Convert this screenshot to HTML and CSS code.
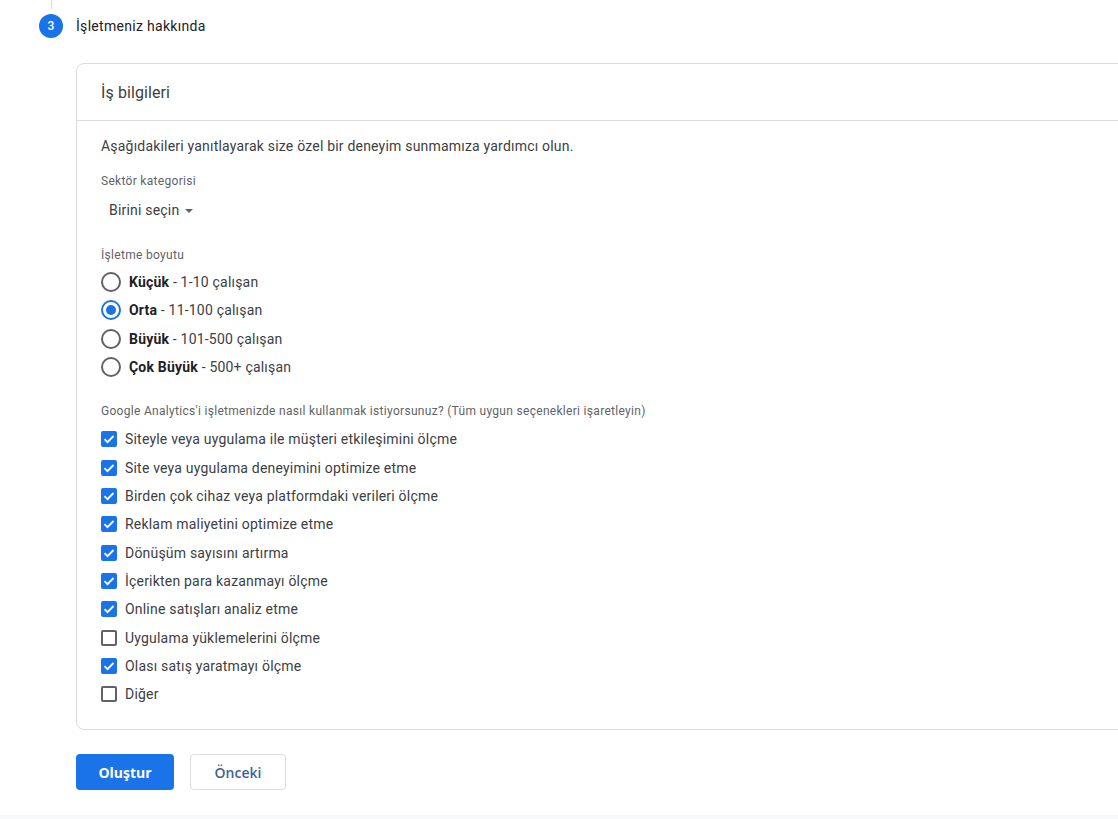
FILE: index.html
```html
<!DOCTYPE html>
<html lang="tr">
<head>
<meta charset="utf-8">
<title>İşletmeniz hakkında</title>
<link rel="stylesheet" href="styles.css">
</head>
<body>
<div class="page">
  <div class="connector"></div>
  <div class="step-head">
    <span class="step-num">3</span>
    <span class="step-title">İşletmeniz hakkında</span>
  </div>

  <section class="card">
    <div class="card-head">İş bilgileri</div>
    <div class="card-body">
      <p class="intro">Aşağıdakileri yanıtlayarak size özel bir deneyim sunmamıza yardımcı olun.</p>

      <div class="field-label label-sector">Sektör kategorisi</div>
      <div class="select">Birini seçin <span class="caret"></span></div>

      <div class="field-label label-size">İşletme boyutu</div>
      <div class="radios">
        <div class="radio-row"><span class="radio"></span><span><b>Küçük</b> - 1-10 çalışan</span></div>
        <div class="radio-row"><span class="radio on"></span><span><b>Orta</b> - 11-100 çalışan</span></div>
        <div class="radio-row"><span class="radio"></span><span><b>Büyük</b> - 101-500 çalışan</span></div>
        <div class="radio-row"><span class="radio"></span><span><b>Çok Büyük</b> - 500+ çalışan</span></div>
      </div>

      <div class="field-label label-use">Google Analytics'i işletmenizde nasıl kullanmak istiyorsunuz? (Tüm uygun seçenekleri işaretleyin)</div>
      <div class="checks">
        <div class="check-row"><span class="box on"><svg viewBox="0 0 16 16"><path d="M3.5 8.2l3 3 6-6.2" /></svg></span><span>Siteyle veya uygulama ile müşteri etkileşimini ölçme</span></div>
        <div class="check-row"><span class="box on"><svg viewBox="0 0 16 16"><path d="M3.5 8.2l3 3 6-6.2" /></svg></span><span>Site veya uygulama deneyimini optimize etme</span></div>
        <div class="check-row"><span class="box on"><svg viewBox="0 0 16 16"><path d="M3.5 8.2l3 3 6-6.2" /></svg></span><span>Birden çok cihaz veya platformdaki verileri ölçme</span></div>
        <div class="check-row"><span class="box on"><svg viewBox="0 0 16 16"><path d="M3.5 8.2l3 3 6-6.2" /></svg></span><span>Reklam maliyetini optimize etme</span></div>
        <div class="check-row"><span class="box on"><svg viewBox="0 0 16 16"><path d="M3.5 8.2l3 3 6-6.2" /></svg></span><span>Dönüşüm sayısını artırma</span></div>
        <div class="check-row"><span class="box on"><svg viewBox="0 0 16 16"><path d="M3.5 8.2l3 3 6-6.2" /></svg></span><span>İçerikten para kazanmayı ölçme</span></div>
        <div class="check-row"><span class="box on"><svg viewBox="0 0 16 16"><path d="M3.5 8.2l3 3 6-6.2" /></svg></span><span>Online satışları analiz etme</span></div>
        <div class="check-row"><span class="box"></span><span>Uygulama yüklemelerini ölçme</span></div>
        <div class="check-row"><span class="box on"><svg viewBox="0 0 16 16"><path d="M3.5 8.2l3 3 6-6.2" /></svg></span><span>Olası satış yaratmayı ölçme</span></div>
        <div class="check-row"><span class="box"></span><span>Diğer</span></div>
      </div>
    </div>
  </section>

  <div class="actions">
    <button class="btn primary">Oluştur</button>
    <button class="btn outline">Önceki</button>
  </div>
</div>
<div class="footer-strip"></div>
</body>
</html>
```

FILE: styles.css
```css
html, body {
  margin: 0;
  padding: 0;
  background: #ffffff;
  overflow: hidden;
}

body {
  font-family: Roboto, "Noto Sans", Arial, sans-serif;
  color: #3c4043;
  font-size: 14px;
  width: 1118px;
  height: 819px;
}

.page {
  height: 815px;
  overflow: hidden;
}

.connector {
  width: 1px;
  height: 9px;
  margin-left: 51px;
  background: #dadce0;
}

.step-head {
  display: flex;
  align-items: center;
  margin-top: 5px;
  margin-left: 39px;
  height: 24px;
}

.step-num {
  width: 24px;
  height: 24px;
  border-radius: 50%;
  background: #1a73e8;
  color: #fff;
  font-size: 12px;
  font-weight: 500;
  display: flex;
  align-items: center;
  justify-content: center;
}

.step-title {
  margin-left: 13px;
  font-size: 14px;
  color: #202124;
  letter-spacing: 0.3px;
}

.card {
  margin-top: 25px;
  margin-left: 76px;
  width: 1100px;
  border: 1px solid #dadce0;
  border-radius: 8px;
  box-sizing: border-box;
  height: 667px;
}

.card-head {
  height: 56px;
  display: flex;
  align-items: center;
  padding-left: 24px;
  font-size: 16px;
  color: #3c4043;
  letter-spacing: 0.1px;
  border-bottom: 1px solid #dadce0;
}

.card-body {
  padding: 15px 24px 20px 24px;
  letter-spacing: 0.2px;
}

.intro {
  margin: 0;
  line-height: 20px;
  font-size: 14px;
  color: #3c4043;
}

.field-label {
  font-size: 12px;
  line-height: 16px;
  color: #5f6368;
  letter-spacing: 0.3px;
}

.label-sector { margin-top: 17px; }

.select {
  margin-top: 3px;
  height: 36px;
  display: flex;
  align-items: center;
  padding-left: 8px;
  font-size: 14px;
  color: #3c4043;
}

.caret {
  display: inline-block;
  margin-left: 6px;
  margin-top: 2px;
  width: 0;
  height: 0;
  border-left: 4px solid transparent;
  border-right: 4px solid transparent;
  border-top: 4px solid #5f6368;
}

.label-size { margin-top: 19px; }

.radios { margin-top: 5px; }

.radio-row {
  height: 28.33px;
  display: flex;
  align-items: center;
  font-size: 14px;
  color: #3c4043;
}

.radio-row b {
  font-weight: 700;
  color: #202124;
}

.radio {
  width: 20px;
  height: 20px;
  box-sizing: border-box;
  border: 2px solid #5f6368;
  border-radius: 50%;
  margin-right: 8px;
  display: flex;
  align-items: center;
  justify-content: center;
}

.radio.on {
  border-color: #1a73e8;
}

.radio.on::after {
  content: "";
  width: 10px;
  height: 10px;
  border-radius: 50%;
  background: #1a73e8;
}

.label-use { margin-top: 22px; }

.checks { margin-top: 6px; }

.check-row {
  height: 28.33px;
  display: flex;
  align-items: center;
  font-size: 14px;
  color: #3c4043;
}

.box {
  width: 16px;
  height: 16px;
  box-sizing: border-box;
  border: 2px solid #5f6368;
  border-radius: 2px;
  margin-right: 8px;
  display: flex;
}

.box.on {
  background: #1a73e8;
  border-color: #1a73e8;
}

.box svg {
  width: 16px;
  height: 16px;
  margin: -2px;
}

.box svg path {
  fill: none;
  stroke: #fff;
  stroke-width: 1.8;
}

.actions {
  display: flex;
  gap: 16px;
  margin-top: 24px;
  margin-left: 76px;
}

.btn {
  height: 36px;
  border-radius: 4px;
  font-family: "Open Sans", Roboto, sans-serif;
  font-size: 14px;
  font-weight: 600;
  cursor: pointer;
}

.btn.primary {
  width: 98px;
  background: #1a73e8;
  border: none;
  color: #fff;
  font-weight: 700;
}

.btn.outline {
  width: 96px;
  background: #fff;
  border: 1px solid #dadce0;
  color: #3f5f95;
  font-weight: 600;
}

.footer-strip {
  height: 4px;
  background: #f8f9fa;
}
```
